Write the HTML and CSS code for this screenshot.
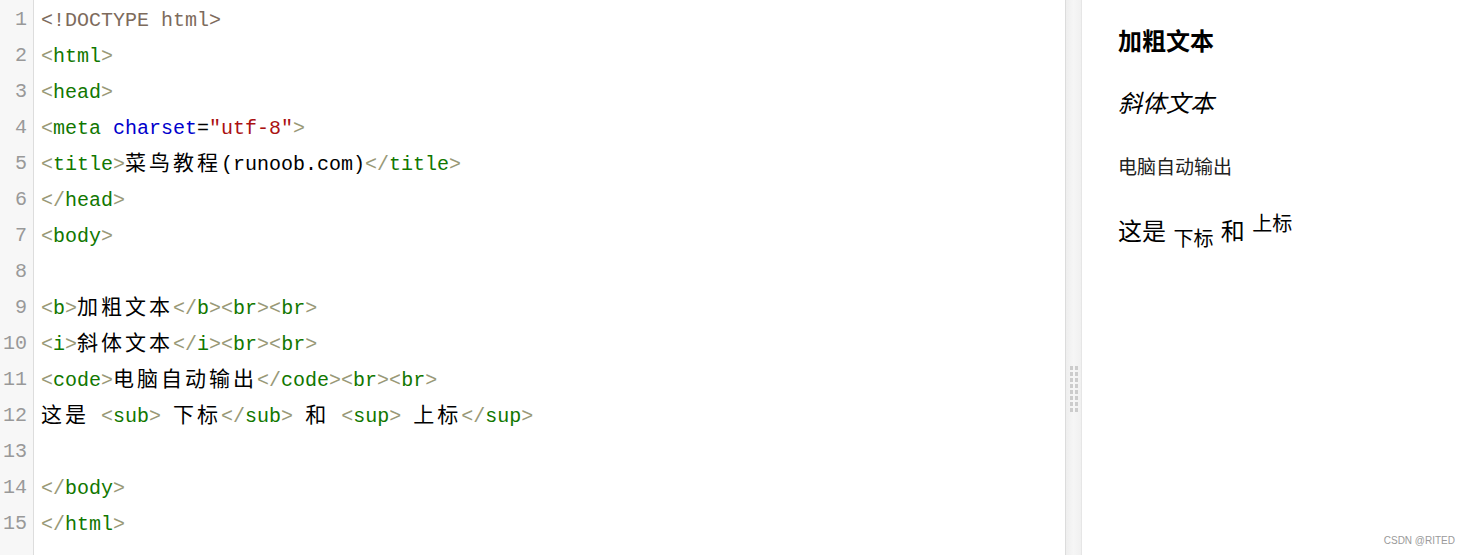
FILE: index.html
```html
<!DOCTYPE html>
<html>
<head>
<meta charset="utf-8">
<link rel="stylesheet" href="styles.css">
</head>
<body>
<div class="app">
  <div class="editor">
    <div class="gutter">
      <div class="ln">1</div><div class="ln">2</div><div class="ln">3</div><div class="ln">4</div><div class="ln">5</div>
      <div class="ln">6</div><div class="ln">7</div><div class="ln">8</div><div class="ln">9</div><div class="ln">10</div>
      <div class="ln">11</div><div class="ln">12</div><div class="ln">13</div><div class="ln">14</div><div class="ln">15</div>
    </div>
    <div class="code">
      <div class="line"><span class="meta">&lt;!DOCTYPE html&gt;</span></div>
      <div class="line"><span class="br">&lt;</span><span class="tag">html</span><span class="br">&gt;</span></div>
      <div class="line"><span class="br">&lt;</span><span class="tag">head</span><span class="br">&gt;</span></div>
      <div class="line"><span class="br">&lt;</span><span class="tag">meta</span> <span class="attr">charset</span>=<span class="str">"utf-8"</span><span class="br">&gt;</span></div>
      <div class="line"><span class="br">&lt;</span><span class="tag">title</span><span class="br">&gt;</span><span class="cj">菜鸟教程</span>(runoob.com)<span class="br">&lt;/</span><span class="tag">title</span><span class="br">&gt;</span></div>
      <div class="line"><span class="br">&lt;/</span><span class="tag">head</span><span class="br">&gt;</span></div>
      <div class="line"><span class="br">&lt;</span><span class="tag">body</span><span class="br">&gt;</span></div>
      <div class="line"></div>
      <div class="line"><span class="br">&lt;</span><span class="tag">b</span><span class="br">&gt;</span><span class="cj">加粗文本</span><span class="br">&lt;/</span><span class="tag">b</span><span class="br">&gt;&lt;</span><span class="tag">br</span><span class="br">&gt;&lt;</span><span class="tag">br</span><span class="br">&gt;</span></div>
      <div class="line"><span class="br">&lt;</span><span class="tag">i</span><span class="br">&gt;</span><span class="cj">斜体文本</span><span class="br">&lt;/</span><span class="tag">i</span><span class="br">&gt;&lt;</span><span class="tag">br</span><span class="br">&gt;&lt;</span><span class="tag">br</span><span class="br">&gt;</span></div>
      <div class="line"><span class="br">&lt;</span><span class="tag">code</span><span class="br">&gt;</span><span class="cj">电脑自动输出</span><span class="br">&lt;/</span><span class="tag">code</span><span class="br">&gt;&lt;</span><span class="tag">br</span><span class="br">&gt;&lt;</span><span class="tag">br</span><span class="br">&gt;</span></div>
      <div class="line"><span class="cj">这是</span> <span class="br">&lt;</span><span class="tag">sub</span><span class="br">&gt;</span> <span class="cj">下标</span><span class="br">&lt;/</span><span class="tag">sub</span><span class="br">&gt;</span> <span class="cj">和</span> <span class="br">&lt;</span><span class="tag">sup</span><span class="br">&gt;</span> <span class="cj">上标</span><span class="br">&lt;/</span><span class="tag">sup</span><span class="br">&gt;</span></div>
      <div class="line"></div>
      <div class="line"><span class="br">&lt;/</span><span class="tag">body</span><span class="br">&gt;</span></div>
      <div class="line"><span class="br">&lt;/</span><span class="tag">html</span><span class="br">&gt;</span></div>
    </div>
  </div>
  <div class="divider">
    <div class="grip">
      <i></i><i></i><i></i><i></i><i></i><i></i><i></i><i></i>
      <i></i><i></i><i></i><i></i><i></i><i></i><i></i><i></i>
    </div>
  </div>
  <div class="preview">
    <div class="pline p1"><b>加粗文本</b></div>
    <div class="pline p2"><i>斜体文本</i></div>
    <div class="pline p3"><code class="pcode">电脑自动输出</code></div>
    <div class="pline p4">这是 <sub>下标</sub> 和 <sup>上标</sup></div>
    <div class="watermark">CSDN @RITED</div>
  </div>
</div>
</body>
</html>
```
FILE: styles.css
```css
html, body {
  margin: 0;
  padding: 0;
  background: #fff;
}
.app {
  display: flex;
  width: 1469px;
  height: 555px;
  overflow: hidden;
}
.editor {
  width: 1065px;
  display: flex;
  background: #fff;
  font-family: "Liberation Mono", "DejaVu Sans Mono", monospace;
  font-size: 20px;
  color: #000;
}
.gutter {
  width: 33px;
  flex: none;
  background: #f7f7f7;
  border-right: 1px solid #ddd;
  padding-top: 2px;
  box-sizing: content-box;
}
.ln {
  height: 36px;
  line-height: 36px;
  text-align: right;
  padding-right: 6px;
  color: #999;
}
.code {
  padding-top: 3px;
  padding-left: 7px;
  flex: 1;
}
.line {
  height: 36px;
  line-height: 36px;
  white-space: pre;
}
.cj {
  font-family: "Noto Sans CJK SC", sans-serif;
  font-size: 21px;
  letter-spacing: 3px;
  line-height: 1;
}
.meta { color: #7d6b5c; }
.br { color: #999977; }
.tag { color: #117700; }
.attr { color: #0000cc; }
.str { color: #aa1111; }
.divider {
  width: 15px;
  flex: none;
  border-left: 1px solid #dcdcdc;
  border-right: 1px solid #e6e6e6;
  background: linear-gradient(to right, #eeeeee, #f6f6f6 50%, #f0f0f0);
  display: flex;
  justify-content: center;
  padding-top: 366px;
  box-sizing: content-box;
}
.grip {
  display: grid;
  grid-template-columns: 3px 3px;
  grid-auto-flow: row;
  grid-auto-rows: 4px;
  column-gap: 2px;
  row-gap: 2px;
  height: 46px;
  margin-left: 1px;
}
.grip i {
  display: block;
  background: #cccccc;
}
.preview {
  flex: 1;
  position: relative;
  padding: 24px 0 0 36px;
  font-family: "Noto Sans CJK SC", sans-serif;
  font-size: 24px;
  color: #000;
}
.pline {
  height: 32px;
  line-height: 32px;
  white-space: nowrap;
}
.p1 { margin-bottom: 30px; }
.p2 { margin-bottom: 30px; }
.p3 { margin-bottom: 34px; }
.p4 { word-spacing: 2px; }
.pline b { font-weight: 700; }
.pcode {
  font-family: "Noto Sans CJK SC", monospace;
  font-size: 19px;
  color: #222;
}
.pline sub, .pline sup {
  font-size: 20px;
  line-height: 0;
}
.watermark {
  position: absolute;
  right: 14px;
  bottom: 9px;
  font-family: "Liberation Sans", Arial, sans-serif;
  font-size: 10px;
  color: #9a9a9a;
}
```
